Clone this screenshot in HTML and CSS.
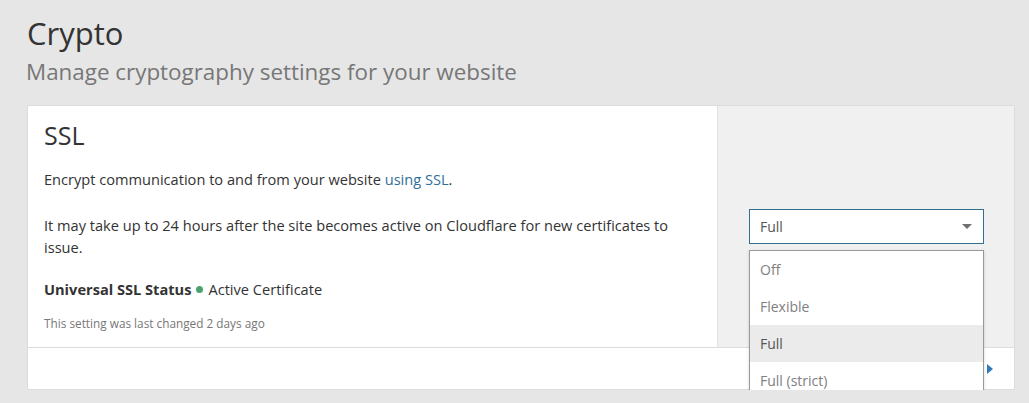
FILE: index.html
```html
<!DOCTYPE html>
<html lang="en">

<head>
    <meta charset="UTF-8">
    <meta name="viewport" content="width=device-width, initial-scale=1.0">
    <title>Crypto</title>
    <link rel="stylesheet" href="styles.css">
</head>

<body>
    <div class="page">
        <header class="page-head">
            <h1 class="page-title">Crypto</h1>
            <p class="page-subtitle">Manage cryptography settings for your website</p>
        </header>

        <div class="card">
            <div class="card-body">
                <div class="card-main">
                    <h2 class="card-title">SSL</h2>
                    <p class="card-text">Encrypt communication to and from your website <a href="#" class="link">using SSL</a>.</p>
                    <p class="card-text">It may take up to 24 hours after the site becomes active on Cloudflare for new certificates to issue.</p>
                    <p class="status">
                        <strong>Universal SSL Status</strong>
                        <span class="status-dot"></span>
                        Active Certificate
                    </p>
                    <p class="card-note">This setting was last changed 2 days ago</p>
                </div>
                <div class="card-side">
                    <div class="select-wrap">
                        <div class="select">
                            <span>Full</span>
                            <span class="caret"></span>
                        </div>
                        <ul class="menu">
                            <li class="menu-item">Off</li>
                            <li class="menu-item">Flexible</li>
                            <li class="menu-item is-active">Full</li>
                            <li class="menu-item">Full (strict)</li>
                        </ul>
                    </div>
                </div>
            </div>
            <div class="card-foot">
                <span class="foot-arrow"></span>
            </div>
        </div>
    </div>
</body>

</html>
```

FILE: styles.css
```css
body {
    margin: 0;
    background: #e6e6e6;
    font-family: "Open Sans", "Noto Sans", Arial, sans-serif;
    color: #333;
}

.page {
    padding: 13px 14px 0 27px;
}

.page-title {
    margin: 0;
    font-size: 31px;
    line-height: 40px;
    font-weight: 400;
    color: #333;
}

.page-subtitle {
    margin: 0;
    font-size: 22.4px;
    line-height: 38px;
    font-weight: 400;
    color: #777;
    margin-left: -1px;
}

.card {
    margin-top: 14px;
    background: #fff;
    border: 1px solid #dcdcdc;
    border-radius: 2px;
}

.card-body {
    display: flex;
    height: 241px;
}

.card-main {
    flex: 1;
    padding: 14px 30px 0 16px;
}

.card-title {
    margin: 0;
    font-size: 25px;
    line-height: 30px;
    font-weight: 400;
    color: #333;
}

.card-text {
    margin: 0;
    font-size: 14.6px;
    line-height: 22px;
    color: #333;
}

.card-title + .card-text {
    margin-top: 18px;
}

.card-text + .card-text {
    margin-top: 24px;
}

.link {
    color: #2f6f99;
    text-decoration: none;
}

.status {
    margin: 20px 0 0;
    font-size: 14.6px;
    line-height: 22px;
    display: flex;
    align-items: center;
    gap: 5px;
}

.status strong {
    font-weight: 700;
}

.status-dot {
    width: 7px;
    height: 7px;
    border-radius: 50%;
    background: #4aa36d;
}

.card-note {
    margin: 15px 0 0;
    font-size: 11.8px;
    line-height: 16px;
    color: #777;
}

.card-side {
    width: 265px;
    background: #f0f0f0;
    border-left: 1px solid #e3e3e3;
    padding-left: 31px;
    display: flex;
    align-items: center;
}

.select-wrap {
    position: relative;
    width: 235px;
}

.select {
    height: 33px;
    border: 1px solid #33708f;
    background: #fff;
    display: flex;
    align-items: center;
    justify-content: space-between;
    padding: 0 10px 0 10px;
    font-size: 14px;
    color: #555;
}

.caret {
    width: 0;
    height: 0;
    border-left: 5px solid transparent;
    border-right: 5px solid transparent;
    border-top: 5px solid #707070;
    margin-right: 1px;
}

.menu {
    position: absolute;
    top: 41px;
    left: 0;
    width: 233px;
    margin: 0;
    padding: 0;
    list-style: none;
    background: #fff;
    border: 1px solid #999;
    box-shadow: 0 1px 3px rgba(0, 0, 0, .15);
}

.menu-item {
    height: 37px;
    line-height: 37px;
    padding: 0 10px;
    font-size: 14px;
    color: #808080;
}

.menu-item.is-active {
    background: #ebebeb;
    color: #555;
}

.card-foot {
    height: 41px;
    border-top: 1px solid #dcdcdc;
    display: flex;
    align-items: center;
    justify-content: flex-end;
    padding-right: 21px;
}

.foot-arrow {
    width: 0;
    height: 0;
    border-top: 5px solid transparent;
    border-bottom: 5px solid transparent;
    border-left: 6px solid #2f7ab8;
}
```
